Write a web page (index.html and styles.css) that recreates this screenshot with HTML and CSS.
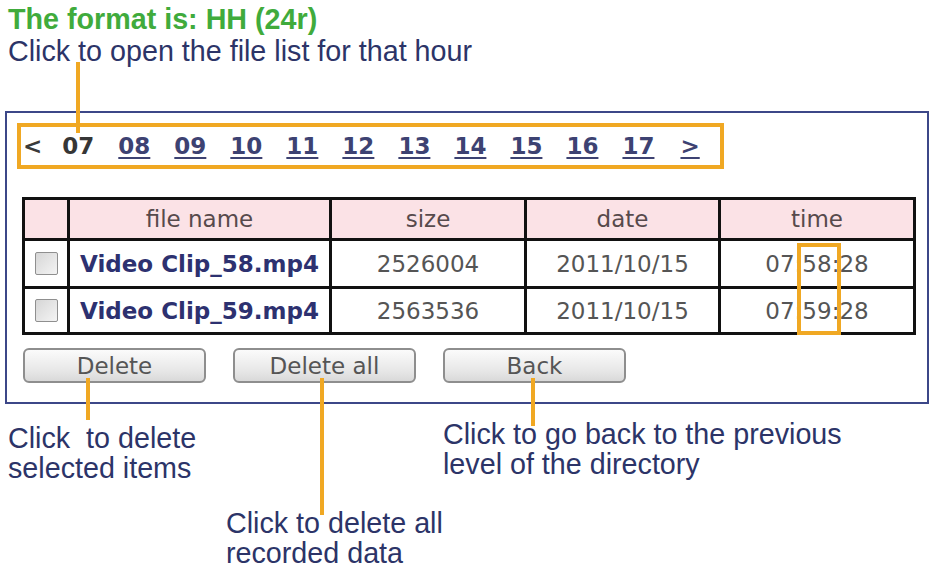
FILE: index.html
```html
<!DOCTYPE html>
<html>
<head>
<meta charset="utf-8">
<link rel="stylesheet" href="styles.css">
</head>
<body>
<div class="page">
  <p class="title">The format is: HH (24r)</p>
  <p class="note">Click to open the file list for that hour</p>

  <div class="panel">
    <div class="hours">
      <span class="prev">&lt;</span>
      <span class="hour current">07</span>
      <a class="hour" href="#">08</a>
      <a class="hour" href="#">09</a>
      <a class="hour" href="#">10</a>
      <a class="hour" href="#">11</a>
      <a class="hour" href="#">12</a>
      <a class="hour" href="#">13</a>
      <a class="hour" href="#">14</a>
      <a class="hour" href="#">15</a>
      <a class="hour" href="#">16</a>
      <a class="hour" href="#">17</a>
      <a class="hour next" href="#">&gt;</a>
    </div>

    <div class="files">
      <div class="cell head"></div>
      <div class="cell head">file name</div>
      <div class="cell head">size</div>
      <div class="cell head">date</div>
      <div class="cell head">time</div>

      <div class="cell row1"><span class="check"></span></div>
      <div class="cell row1 name">Video Clip_58.mp4</div>
      <div class="cell row1">2526004</div>
      <div class="cell row1">2011/10/15</div>
      <div class="cell row1">07:58:28</div>

      <div class="cell row2"><span class="check"></span></div>
      <div class="cell row2 name">Video Clip_59.mp4</div>
      <div class="cell row2">2563536</div>
      <div class="cell row2">2011/10/15</div>
      <div class="cell row2">07:59:28</div>

      <div class="minute-mark"></div>
    </div>

    <div class="buttons">
      <button class="btn">Delete</button>
      <button class="btn">Delete all</button>
      <button class="btn">Back</button>
    </div>
  </div>

  <div class="notes-row">
    <p class="note note-delete">Click &nbsp;to delete<br>selected items</p>
    <p class="note note-back">Click to go back to the previous<br>level of the directory</p>
  </div>
  <p class="note note-all">Click to delete all<br>recorded data</p>

  <span class="pointer p-hours"></span>
  <span class="pointer p-delete"></span>
  <span class="pointer p-all"></span>
  <span class="pointer p-back"></span>
</div>
</body>
</html>
```

FILE: styles.css
```css
html, body {
  margin: 0;
  padding: 0;
  background: #ffffff;
}

.page {
  position: relative;
  width: 934px;
  height: 568px;
  overflow: hidden;
  padding-top: 3px;
  box-sizing: border-box;
  font-family: "Liberation Sans", Arial, sans-serif;
}

.title {
  margin: 0;
  padding-left: 8px;
  font-size: 28.7px;
  line-height: 32px;
  font-weight: bold;
  color: #40ab3c;
}

.note {
  margin: 0;
  padding-left: 8px;
  font-size: 28.7px;
  line-height: 32px;
  color: #2c3468;
}

.panel {
  margin: 44px 0 0 5px;
  width: 924px;
  box-sizing: border-box;
  border: 2px solid #3c4788;
  padding: 10px 0 19px 0;
  font-family: "DejaVu Sans", Verdana, sans-serif;
}

.hours {
  margin-left: 10px;
  width: 707px;
  height: 46px;
  box-sizing: border-box;
  border: 4px solid #f0a823;
  padding-left: 2px;
  display: flex;
  align-items: center;
  font-size: 23px;
  line-height: 38px;
  font-weight: bold;
}

.prev {
  color: #3a3a3a;
}

.hour {
  margin-left: 24px;
  color: #3d4272;
  text-decoration: underline;
  text-underline-offset: 3px;
  text-decoration-thickness: 2px;
}

.prev + .hour {
  margin-left: 20px;
}

.hour.current {
  color: #363636;
  text-decoration: none;
}

.hour.next {
  margin-left: 26px;
}

.files {
  position: relative;
  margin: 28px 0 0 15px;
  width: 894px;
  display: grid;
  grid-template-columns: 45px 262px 195px 194px 195px;
  grid-template-rows: 41px 48px 46px;
  border-top: 3px solid #111;
  border-left: 3px solid #111;
  box-sizing: border-box;
  font-size: 23px;
  color: #555555;
}

.cell {
  box-sizing: border-box;
  border-right: 3px solid #111;
  border-bottom: 3px solid #111;
  display: flex;
  align-items: center;
  justify-content: center;
  background: #ffffff;
}

.cell.head {
  background: #fbe2e6;
  color: #574a4c;
}

.cell.name {
  font-weight: bold;
  color: #2d3170;
}

.check {
  display: block;
  width: 21px;
  height: 21px;
  border: 1.5px solid #8f8f8f;
  border-radius: 2px;
  background: linear-gradient(135deg, #d6d6d6, #f4f4f4);
}

.minute-mark {
  position: absolute;
  left: 772px;
  top: 43px;
  width: 44px;
  height: 92px;
  box-sizing: border-box;
  border: 4px solid #f0a823;
}

.buttons {
  display: flex;
  gap: 27px;
  margin: 13px 0 0 16px;
}

.btn {
  width: 183px;
  height: 35px;
  box-sizing: border-box;
  border: 2px solid #8e8e8e;
  border-radius: 6px;
  background: linear-gradient(#fbfbfb, #e6e6e6 70%, #d9d9d9);
  font-family: "DejaVu Sans", Verdana, sans-serif;
  font-size: 23px;
  line-height: 28px;
  color: #555555;
  padding: 0;
}

.notes-row {
  display: flex;
  margin-top: 19px;
}

.notes-row .note,
.note-all {
  line-height: 30px;
}

.note-delete {
  width: 427px;
}

.note-back {
  padding-left: 8px;
  margin-top: -4px;
}

.note-all {
  margin-top: 25px;
  padding-left: 226px;
}

.pointer {
  position: absolute;
  width: 4px;
  background: #f0a823;
}

.p-hours {
  left: 76px;
  top: 62px;
  height: 71px;
}

.p-delete {
  left: 86px;
  top: 378px;
  height: 42px;
}

.p-all {
  left: 320px;
  top: 378px;
  height: 137px;
}

.p-back {
  left: 531px;
  top: 378px;
  height: 48px;
}
```
